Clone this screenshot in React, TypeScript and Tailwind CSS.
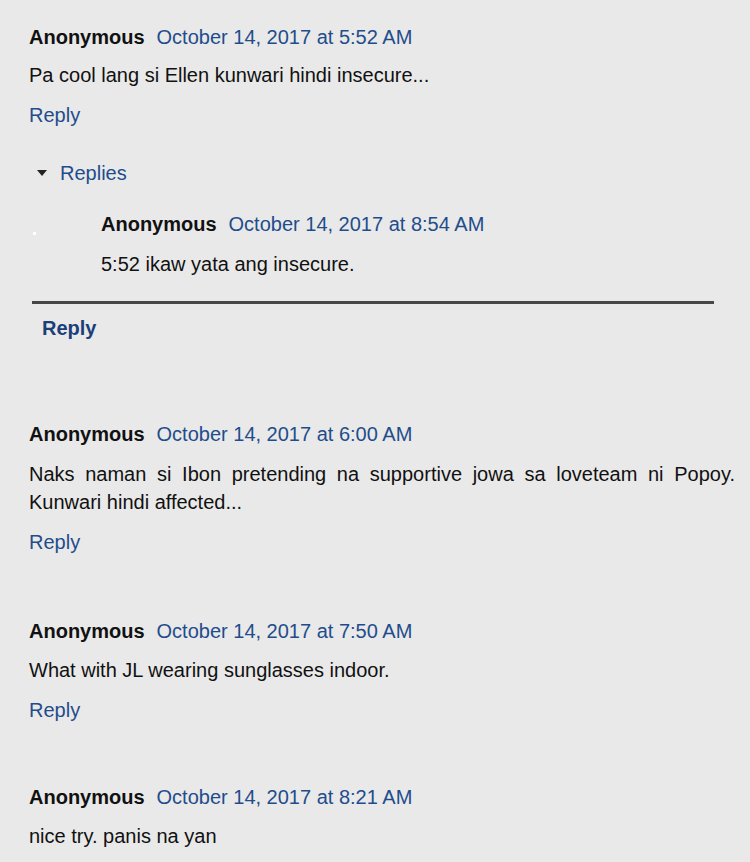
const FONT = "font-['Liberation_Sans',Arial,sans-serif]";

function Header({ time }: { time: string }) {
  return (
    <div className="flex items-baseline h-[28px] leading-[28px]">
      <span className="font-bold text-[#111]">Anonymous</span>
      <span className="ml-[12px] text-[#1f4d8c]">October 14, 2017 at {time}</span>
    </div>
  );
}

function Comment({
  time,
  body,
  reply = true,
  className = "",
  bodyGap = "mt-[11px]",
}: {
  time: string;
  body: string;
  reply?: boolean;
  className?: string;
  bodyGap?: string;
}) {
  return (
    <div className={className}>
      <Header time={time} />
      <p className={`${bodyGap} leading-[28px] text-[#111] text-justify`}>{body}</p>
      {reply && <div className="mt-[12px] h-[28px] leading-[28px] text-[#1f4d8c]">Reply</div>}
    </div>
  );
}

export default function App() {
  return (
    <div className={`${FONT} h-[862px] w-[750px] bg-[#e9e9e9] text-[20px] pl-[29px] pr-[15px] pt-[23px] overflow-hidden`}>
      <Comment time="5:52 AM" body="Pa cool lang si Ellen kunwari hindi insecure..." bodyGap="mt-[10px]" />

      <div className="mt-[30px] flex items-center h-[28px] leading-[28px] ml-[8px]">
        <span className="w-0 h-0 border-l-[5px] border-r-[5px] border-t-[6px] border-l-transparent border-r-transparent border-t-[#222] mr-[13px]" />
        <span className="text-[#1f4d8c]">Replies</span>
      </div>

      <div className="mt-[23px] flex">
        <div className="w-[72px] pt-[22px] pl-[4px]">
          <div className="w-[3px] h-[3px] bg-white" />
        </div>
        <Comment time="8:54 AM" body="5:52 ikaw yata ang insecure." reply={false} bodyGap="mt-[12px]" />
      </div>

      <div className="mt-[23px] ml-[3px] w-[682px] h-[3px] bg-[#474747]" />
      <div className="mt-[10px] ml-[13px] h-[28px] leading-[28px] font-bold text-[#1b3f78]">Reply</div>

      <Comment
        className="mt-[78px]"
        time="6:00 AM"
        body="Naks naman si Ibon pretending na supportive jowa sa loveteam ni Popoy. Kunwari hindi affected..."
        bodyGap="mt-[12px]"
      />
      <Comment
        className="mt-[61px]"
        time="7:50 AM"
        body="What with JL wearing sunglasses indoor."
      />
      <Comment className="mt-[59px]" time="8:21 AM" body="nice try. panis na yan" reply={false} />
    </div>
  );
}
